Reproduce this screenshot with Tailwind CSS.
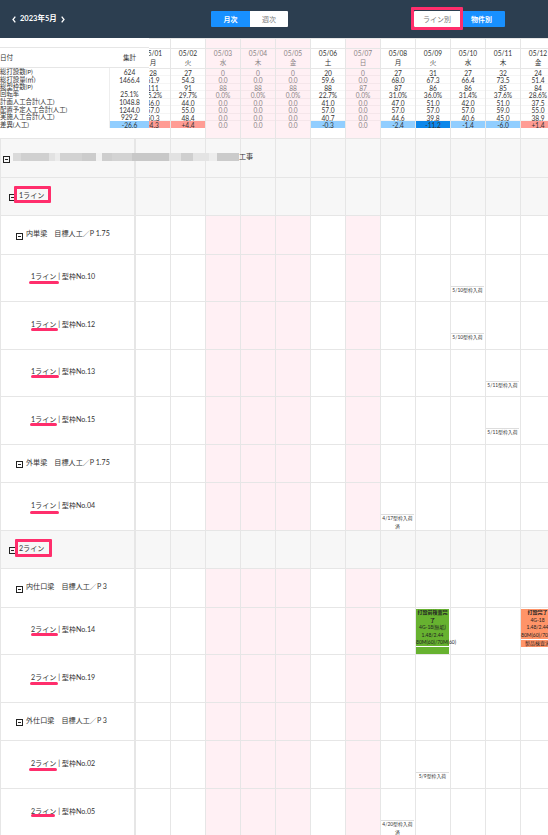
<!DOCTYPE html>
<html lang="ja">
<head>
<meta charset="utf-8">
<title>2023年5月</title>
<script src="https://cdn.jsdelivr.net/npm/@tailwindcss/browser@4"></script>
</head>
<body class="w-[548px] h-[835px] overflow-hidden bg-white font-['Lato','Noto_Sans_CJK_JP',sans-serif] text-[#333]">
<header class="relative flex items-center h-[38px] bg-[#2c3e50] text-[7px] leading-none">
  <div class="flex items-center w-[211px] pl-[12px] text-white font-bold text-[7.5px]">
    <svg class="w-[4px] h-[7px] mr-[4px]" viewBox="0 0 4 7" fill="none" stroke="white" stroke-width="1.3"><path d="M3.3 .6 1 3.5l2.3 2.9"/></svg>
    <span class="whitespace-nowrap">2023年5月</span>
    <svg class="w-[4px] h-[7px] ml-[4px]" viewBox="0 0 4 7" fill="none" stroke="white" stroke-width="1.3"><path d="M.7 .6 3 3.5 .7 6.4"/></svg>
  </div>
  <div class="flex h-[16px] w-[77px] rounded-[1px] overflow-hidden">
    <div class="flex items-center justify-center w-[39px] bg-[#1890ff] text-white font-bold">月次</div>
    <div class="flex items-center justify-center w-[38px] bg-white text-[#777]">週次</div>
  </div>
  <div class="flex h-[16px] w-[91px] ml-[126px] rounded-[1px] overflow-hidden">
    <div class="flex items-center justify-center w-[46px] bg-white text-[#777]">ライン別</div>
    <div class="flex items-center justify-center w-[45px] pr-[2px] bg-[#1890ff] text-white font-bold">物件別</div>
  </div>
  <div class="absolute left-[411px] top-[7px] w-[52px] h-[23px] border-3 border-[#ff2e6c] rounded-[1px]"></div>
</header>

<section class="flex h-[100px] text-[6.6px] leading-none">
  <div id="summary" class="w-[149px] shrink-0 pt-[9px]"></div>
  <div class="flex-1 overflow-hidden"><div id="days" class="flex w-[420px] -ml-[13px] h-[100px]"></div></div>
</section>

<main id="rows" class="text-[7.1px] leading-none"></main>

<script>
const labels = [['総打設数(P)','624'],['総打設量(㎥)','1466.4'],['総型枠数(P)',''],['回転率','25.1%'],['計画人工合計(人工)','1048.8'],['配置予定人工合計(人工)','1244.0'],['実施人工合計(人工)','929.2'],['差異(人工)','-26.6']];
const leftH = [8,7,7,8,8,7,8,7], rightH = [7,8,7,8,7,8,7,7];
const days = [
 ['05/01','月','28','61.9','111','25.2%','46.0','57.0','50.3','-4.3'],
 ['05/02','火','27','54.3','91','29.7%','44.0','55.0','48.4','+4.4'],
 ['05/03','水','0','0.0','88','0.0%','0.0','0.0','0.0','0.0'],
 ['05/04','木','0','0.0','88','0.0%','0.0','0.0','0.0','0.0'],
 ['05/05','金','0','0.0','88','0.0%','0.0','0.0','0.0','0.0'],
 ['05/06','土','20','59.6','88','22.7%','41.0','57.0','40.7','-0.3'],
 ['05/07','日','0','0.0','87','0.0%','0.0','0.0','0.0','0.0'],
 ['05/08','月','27','68.0','87','31.0%','47.0','57.0','44.6','-2.4'],
 ['05/09','火','31','67.3','86','36.0%','51.0','57.0','39.8','-11.2'],
 ['05/10','水','27','66.4','86','31.4%','42.0','57.0','40.6','-1.4'],
 ['05/11','木','32','73.5','85','37.6%','51.0','59.0','45.0','-6.0'],
 ['05/12','金','24','51.4','84','28.6%','37.5','55.0','38.9','+1.4']];
const holiday = i => (i >= 2 && i <= 4) || i === 6;
const diffBg = i => ({0:'bg-[#ff9c94]',1:'bg-[#ff9c94]',5:'bg-[#91ceff]',7:'bg-[#91ceff]',8:'bg-[#0d87ea]',9:'bg-[#91ceff]',10:'bg-[#91ceff]',11:'bg-[#ff9c94]'})[i] || '';

document.getElementById('summary').innerHTML =
 `<div class="flex h-[21px] items-center border-y border-[#e6e6e6]"><span class="w-[110px]">日付</span><span class="w-[39px] text-center">集計</span></div>` +
 labels.map(([l,v],i) => `<div class="flex items-center" style="height:${leftH[i]}px">
  <div class="flex items-center w-[110px] h-full border-r border-[#eee] whitespace-nowrap text-[6.4px] pt-px">${l}</div>
  <div class="flex items-center justify-center w-[39px] h-full pt-px ${i===7?'bg-[#91ceff]':''}">${v}</div></div>`).join('');

document.getElementById('days').innerHTML = days.map((d,i) =>
 `<div class="flex flex-col w-[35px] shrink-0 border-r border-t border-[#e6e6e6] ${holiday(i)?'bg-[#fff0f4] text-[#8a8486]':''}">
  <div class="h-[10px] border-b border-[#e6e6e6]"></div>
  <div class="flex flex-col items-center h-[20px] border-b border-[#e6e6e6]"><span class="h-[9px] leading-[9px]">${d[0]}</span><span class="h-[9px] leading-[9px]">${d[1]}</span></div>
  ${rightH.map((h,r) => `<div class="flex items-center justify-center ${r===7?'pt-px '+diffBg(i):'pt-px shadow-[inset_0_-1px_0_#0000000a]'}" style="height:${h}px">${d[r+2]}</div>`).join('')}
 </div>`).join('');

const toggle = `<svg class="w-[7px] h-[7px] shrink-0 relative top-[2px]" viewBox="0 0 7 7" fill="none" stroke="#222" shape-rendering="crispEdges"><path d="M.5 .5h6v6h-6zM2 3.5h3"/></svg>`;
const note = t => `<div class="pt-[31px] w-[33px]"><div class="border-t border-[#ddd] text-[4.9px] leading-[8px] text-center text-[#333]"><div class="-mt-px">${t}</div></div></div>`;
const green = `<div class="pt-[1px] w-[33px] text-[5px] leading-[7.5px] text-center text-[#222]"><div class="h-[37px] bg-[#67b230] whitespace-nowrap"><b class="block whitespace-normal">打設前検査完了</b>4G-18(無垢)<br>1.48/2.44<br>80M(60)/70M(60)</div><div class="h-[7px] mt-px bg-[#67b230]"></div></div>`;
const orange = `<div class="pt-[1px] w-[33px] text-[5px] leading-[7.5px] text-center text-[#222]"><div class="h-[30px] bg-[#ff9468] whitespace-nowrap"><b class="block">打設完了</b>4G-18<br>1.48/2.44<br>80M(60)/70M(60)</div><div class="h-[7px] mt-px bg-[#ff9468] whitespace-nowrap">製品検査済</div></div>`;
const mosaic = [[8,'#dadada'],[28,'#d0d0d0'],[6,'#e2e2e2'],[5,'#ececec'],[22,'#d2d2d2'],[14,'#cccccc'],[6,'#f2f2f2'],[10,'#cecece'],[20,'#d3d3d3'],[37,'#c8c8c8'],[12,'#e2e2e2'],[12,'#cfcfcf'],[16,'#e4e4e4'],[8,'#ededed'],[22,'#cbcbcb']];

// [height, kind, text, [left, top, width, height] of a frame or [left, width, top] of an underline, {column: content}]
const rows = [
 [39,'site','工事'],
 [38,'line','1ライン',[14,9,37,17]],
 [39,'group','内単梁　目標人工／P 1.75'],
 [47,'item','1ライン | 型枠No.10',[29,30,27],{9:note('5/10型枠入荷')}],
 [48,'item','1ライン | 型枠No.12',[31,27,27],{9:note('5/10型枠入荷')}],
 [47,'item','1ライン | 型枠No.13',[31,28,26],{10:note('5/11型枠入荷')}],
 [48,'item','1ライン | 型枠No.15',[30,27,27],{10:note('5/11型枠入荷')}],
 [38,'group','外単梁　目標人工／P 1.75'],
 [48,'item','1ライン | 型枠No.04',[30,29,29],{7:note('4/17型枠入荷済')}],
 [38,'line','2ライン',[15,9,37,18]],
 [39,'group','内仕口梁　目標人工／P 3'],
 [47,'item','2ライン | 型枠No.14',[31,27,26],{8:green,11:orange}],
 [48,'item','2ライン | 型枠No.19',[30,28,28],{}],
 [38,'group','外仕口梁　目標人工／P 3'],
 [48,'item','2ライン | 型枠No.02',[29,28,28],{8:note('5/9型枠入荷')}],
 [48,'item','2ライン | 型枠No.05',[31,24,26],{7:note('4/20型枠入荷済')}]];
const pads = {site:'pl-[2px]',line:'pl-[8px]',group:'pl-[15px]',item:'pl-[30px]'};
document.getElementById('rows').innerHTML = rows.map(([h,k,t,m,c]) => {
 const shade = k==='site'||k==='line';
 const label = k==='site'
  ? `${toggle}<span class="flex w-[226px] h-[8px] ml-[3px] shrink-0">${mosaic.map(([w,b])=>`<i class="h-full shrink-0" style="width:${w}px;background:${b}"></i>`).join('')}</span>${t}`
  : k==='line' ? `${toggle}<span class="ml-[3px]">${t}</span><i class="absolute border-3 border-[#ff2e6c] rounded-[1px]" style="left:${m[0]-1}px;top:${m[1]-1}px;width:${m[2]}px;height:${m[3]}px"></i>`
  : k==='group' ? `${toggle}<span class="ml-[3px]">${t}</span>`
  : `${t}<i class="absolute h-[3px] rounded-full bg-[#ff2e6c]" style="left:${m[0]-1}px;top:${m[2]-1}px;width:${m[1]}px"></i>`;
 return `<div class="flex border-t border-l border-[#e6e6e6] ${shade?'bg-[#f7f7f7]':''}" style="height:${h}px">
  <div class="relative z-10 flex items-center w-[135px] shrink-0 pb-[2px] border-r-2 border-[#e6e6e6] whitespace-nowrap ${pads[k]}">${label}</div>
  ${days.map((_,i)=>`<div class="shrink-0 w-[35px] border-r border-[#e6e6e6] ${holiday(i)&&!shade?'bg-[#fff0f4]':''}">${c&&c[i]||''}</div>`).join('')}
 </div>`;}).join('');
</script>
</body>
</html>
